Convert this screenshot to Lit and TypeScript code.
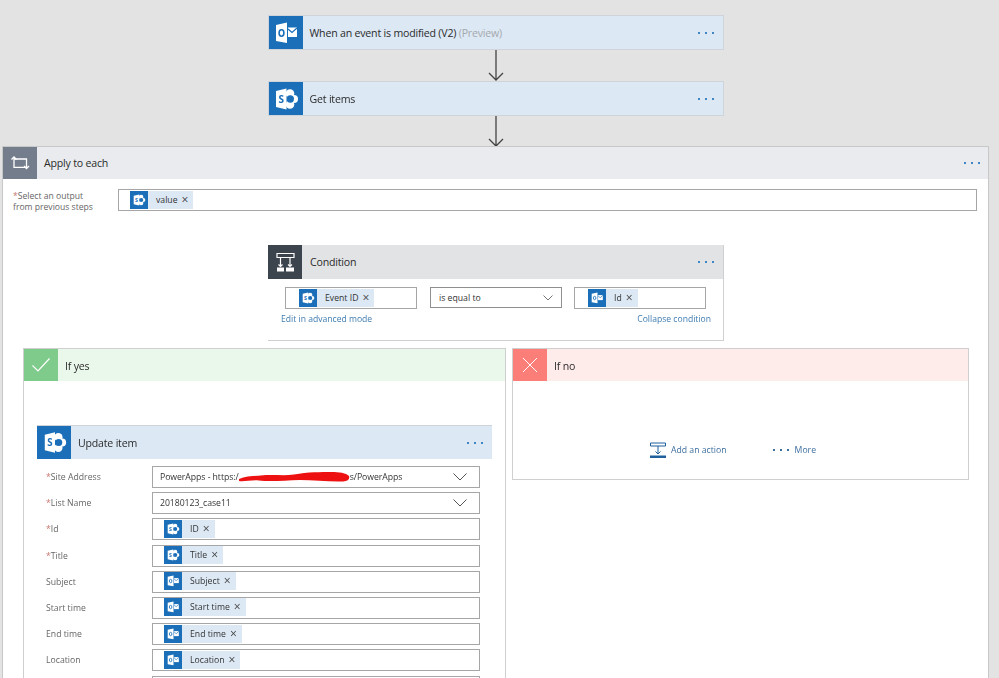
import { LitElement, html, css, svg } from "lit";
import { customElement } from "lit/decorators.js";

const outlook = (s: number) => html`<svg width=${s} height=${s} viewBox="0 0 34 34"><path fill="#fff" d="M7 9 18 6.500v20.500L7 25z"/><path fill="#fff" d="M19 11.500h9v9.500h-9z"/><path fill="none" stroke="#1b6fb9" stroke-width="1.200" d="M19 13l4 3.500 5-4.500"/><ellipse cx="12.500" cy="17" rx="2.400" ry="3.200" fill="none" stroke="#1b6fb9" stroke-width="1.600"/></svg>`;
const sharepoint = (s: number) => html`<svg width=${s} height=${s} viewBox="0 0 34 34"><circle cx="21" cy="11.500" r="4.300" fill="#fff"/><circle cx="25" cy="17" r="4" fill="#fff"/><circle cx="21" cy="22.500" r="4.300" fill="#fff"/><circle cx="21.300" cy="17" r="3.700" fill="#1b6fb9"/><path fill="#fff" d="M7 9 17.500 6.500v21L7 25z"/><text x="12.200" y="20.700" text-anchor="middle" font-family="Open Sans, sans-serif" font-weight="700" font-size="10" fill="#1b6fb9">S</text></svg>`;
const chev = html`<svg class="chev" width="14" height="8" viewBox="0 0 14 8"><path d="M.5.5 7 7 13.500.5" fill="none" stroke="#555" stroke-width="1"/></svg>`;
const chevSm = html`<svg class="chevsm" width="10" height="6" viewBox="0 0 10 6"><path d="M.5.5 5 5 9.500.5" fill="none" stroke="#777" stroke-width="1"/></svg>`;
const loop = html`<svg width="34" height="32" viewBox="0 0 34 32" fill="none" stroke="#fff" stroke-width="1.300"><path d="M11 21v-10M11 12h12.500v9M11 20.300h12.500"/><path d="M8.500 12.500 11 10l2.500 2.500M21 19l2.500 2.500L26 19"/></svg>`;
const cond = html`<svg width="34" height="34" viewBox="0 0 34 34" fill="none" stroke="#fff" stroke-width="1.200"><path d="M9 8.500h17v4H9zM12.500 12.500v9M22 12.500v9M10.500 19.500l2 2 2-2M20 19.500l2 2 2-2"/><path fill="#fff" stroke="none" d="M9 22.500h7v4H9zM18 22.500h8v4H18z"/></svg>`;
const scribble = svg`<path fill="#ee1111" d="M0 8C6 5 14 5 22 4.500 34 3 44 5 56 3.500 70 1 84 1 94 1 102 1 109 2 112 5 113 8 111 10 106 10.500 92 11 76 9 62 9 46 9.500 32 11 20 9.500 12 9 4 11 0 10z"/>`;

type Tok = { i: "o" | "s"; t: string };

@customElement("app-root")
export class AppRoot extends LitElement {
  static styles = css`
    :host { display: block; width: 999px; height: 678px; overflow: hidden; background: #e3e3e3; font-family: "Open Sans", "Noto Sans", sans-serif; font-size: 10px; color: #333; }
    .page { display: flex; flex-direction: column; align-items: center; padding: 15px 11px 0 3px; filter: blur(0.35px); }
    .card { width: 456px; box-sizing: border-box; height: 35px !important; border: 1px solid #cfd4da; }
    .card .ico { margin-right: 7px; }
    .head { display: flex; align-items: center; height: 33px; background: #dce8f4; font-size: 10.6px; letter-spacing: -0.2px; color: #2b2b2b; }
    .ico { width: 34px; height: 100%; display: flex; align-items: center; justify-content: center; background: #1b6fb9; flex: none; margin-right: 8px; }
    .title { flex: 1; }
    .prev { color: #a5a9ad; }
    .dots { margin-right: 9px; display: flex; gap: 5px; }
    .dots i { width: 2px; height: 2px; background: #3f86c6; display: block; }
    .arrow { display: block; width: 16px; height: 31px; flex: none; }
    .apply { width: 985px; background: #fff; outline: 1px solid #c8c8c8; height: 540px; display: flex; flex-direction: column; }
    .apply > .head { background: #e9ebee; height: 32px; flex: none; }
    .apply > .head .ico { background: #737d8c; margin-right: 7px; }
    .apply > .head .dots { margin-right: 8px; }
    .selrow { display: flex; padding: 10px 11px 0 10px; height: 22px; }
    .lab { font-size: 8.600px; line-height: 11px; color: #666; width: 105px; flex: none; padding-top: 2px; white-space: nowrap; }
    .req { color: #c9766f; }
    .inp { flex: 1; box-sizing: border-box; height: 22px; border: 1px solid #a6a6a6; background: #fff; display: flex; align-items: center; padding-left: 11px; font-size: 8.700px; color: #333; min-width: 0; }
    .tok { display: flex; align-items: center; height: 18px; background: #dce8f4; color: #333; padding-right: 5px; margin-top: -1px; }
    .tok .ti { width: 18px; height: 18px; background: #1b6fb9; display: flex; margin-right: 8px; }
    .tok b { font-weight: 400; margin-left: 4px; font-size: 12px; line-height: 10px; color: #444; }
    .condwrap { display: flex; justify-content: center; margin-top: 34px; }
    .cond { width: 456px; height: 96px; box-sizing: border-box; background: #fff; border: solid #d0d0d0; border-width: 0 1px 1px 0; margin-left: 1px; }
    .cond .head { background: #e2e3e5; height: 34px; }
    .cond .head .ico { background: #3c444d; }
    .cfields { display: flex; gap: 13px; padding: 8px 18px 0 17px; }
    .cfields .inp { flex: none; width: 132px; padding-left: 13px; }
    .cfields .sel { height: 21px; border: 1px solid #8f8f8f; justify-content: space-between; padding: 0 8px 0 8px; margin-right: -1px; }
    .links { display: flex; justify-content: space-between; padding: 4px 12px 0 13px; font-size: 8.600px; color: #3f7cb0; }
    .branches { display: flex; align-items: flex-start; gap: 8px; margin: 8px 0 0 21px; }
    .br { background: #fff; outline: 1px solid #cfcfcf; }
    .yes { width: 481px; height: 400px; }
    .no { width: 455px; height: 130px; display: flex; flex-direction: column; }
    .br > .head { height: 32px; }
    .br > .head .title { padding-top: 2px; }
    .yes > .head { background: #e9f8ea; }
    .no > .head { background: #feecea; }
    .yes > .head .ico { background: #7fcb8c; margin-right: 7px; }
    .no > .head .ico { background: #fb7f78; margin-right: 7px; }
    .acts { display: flex; justify-content: center; align-items: center; gap: 46px; padding: 61px 15px 0 0; font-size: 8.700px; color: #3f6f9f; }
    .act { display: flex; align-items: center; gap: 5px; }
    .more { gap: 6px; }
    .more .dots { margin: 0; gap: 5px; }
    .more .dots i { background: #3f6f9f; }
    .upd { width: 455px; margin: 44px 0 0 13px; outline: none; border-top: 1px solid #cfd4da; }
    .upd > .head { height: 33px; background: #dce8f4; }
    .upd > .head .ico { margin-right: 7px; }
    .rows { display: flex; flex-direction: column; padding-top: 7px; gap: 4.200px; }
    .row { display: flex; align-items: center; padding-left: 9px; height: 22px; }
    .row .l { font-size: 8.700px; color: #666; width: 106px; flex: none; }
    .row .inp { flex: none; width: 328px; box-sizing: border-box; height: 22px; padding-left: 11px; }
    .row .txt { flex: 1; padding-left: 0; margin-left: -4px; white-space: nowrap; display: flex; align-items: center; color: #333; letter-spacing: -0.05px; }
    .chev { flex: none; margin-right: 12px; }
    .chevsm { flex: none; }
  `;
  dots() { return html`<span class="dots"><i></i><i></i><i></i></span>`; }
  arrow() { return html`<svg class="arrow" viewBox="0 0 16 31" fill="none" stroke="#444" stroke-width="1.300"><path d="M8 0v30M1 23l7 7 7-7"/></svg>`; }
  tok(k: "o" | "s", t: string) {
    return html`<span class="tok"><span class="ti">${k === "o" ? outlook(18) : sharepoint(18)}</span>${t}<b>×</b></span>`;
  }
  row(label: string, req: boolean, inner: unknown) {
    return html`<div class="row"><span class="l">${req ? html`<span class="req">*</span>` : ""}${label}</span><div class="inp">${inner}</div></div>`;
  }
  render() {
    const toks: [string, boolean, Tok][] = [
      ["Id", true, { i: "s", t: "ID" }],
      ["Title", true, { i: "s", t: "Title" }],
      ["Subject", false, { i: "o", t: "Subject" }],
      ["Start time", false, { i: "o", t: "Start time" }],
      ["End time", false, { i: "o", t: "End time" }],
      ["Location", false, { i: "o", t: "Location" }],
    ];
    return html`<div class="page">
      <div class="card head"><span class="ico">${outlook(34)}</span><span class="title">When an event is modified (V2) <span class="prev">(Preview)</span></span>${this.dots()}</div>
      ${this.arrow()}
      <div class="card head"><span class="ico">${sharepoint(34)}</span><span class="title">Get items</span>${this.dots()}</div>
      ${this.arrow()}
      <div class="apply">
        <div class="head"><span class="ico">${loop}</span><span class="title">Apply to each</span>${this.dots()}</div>
        <div class="selrow"><div class="lab"><span class="req">*</span>Select an output<br />from previous steps</div><div class="inp">${this.tok("s", "value")}</div></div>
        <div class="condwrap"><div class="cond">
          <div class="head"><span class="ico">${cond}</span><span class="title">Condition</span>${this.dots()}</div>
          <div class="cfields">
            <div class="inp">${this.tok("s", "Event ID")}</div>
            <div class="inp sel">is equal to ${chevSm}</div>
            <div class="inp">${this.tok("o", "Id")}</div>
          </div>
          <div class="links"><span>Edit in advanced mode</span><span>Collapse condition</span></div>
        </div></div>
        <div class="branches">
          <div class="br yes">
            <div class="head"><span class="ico"><svg width="20" height="16" viewBox="0 0 20 16"><path d="M1.500 8.500 7 14 18.500 1.500" fill="none" stroke="#fff" stroke-width="1.200"/></svg></span><span class="title">If yes</span></div>
            <div class="upd">
              <div class="head"><span class="ico">${sharepoint(33)}</span><span class="title">Update item</span>${this.dots()}</div>
              <div class="rows">
                ${this.row("Site Address", true, html`<div class="txt">PowerApps - https:/<svg width="111" height="12" viewBox="0 0 113 12">${scribble}</svg>s/PowerApps</div>${chev}`)}
                ${this.row("List Name", true, html`<div class="txt">20180123_case11</div>${chev}`)}
                ${toks.map(([l, r, t]) => this.row(l, r, this.tok(t.i, t.t)))}
                ${this.row("", false, "")}
              </div>
            </div>
          </div>
          <div class="br no">
            <div class="head"><span class="ico"><svg width="16" height="16" viewBox="0 0 16 16"><path d="M1 1l14 14M15 1 1 15" stroke="#fff" stroke-width="1" fill="none"/></svg></span><span class="title">If no</span></div>
            <div class="acts">
              <span class="act"><svg width="16" height="16" viewBox="0 0 16 16"><path d="M.5 1h15v3H.5zM8 4v8M5.500 9.500 8 12l2.500-2.500" fill="none" stroke="#1f5f9c"/><path d="M0 13.500h16V16H0z" fill="#1f5f9c"/></svg>Add an action</span>
              <span class="act more">${this.dots()}More</span>
            </div>
          </div>
        </div>
      </div>
    </div>`;
  }
}
